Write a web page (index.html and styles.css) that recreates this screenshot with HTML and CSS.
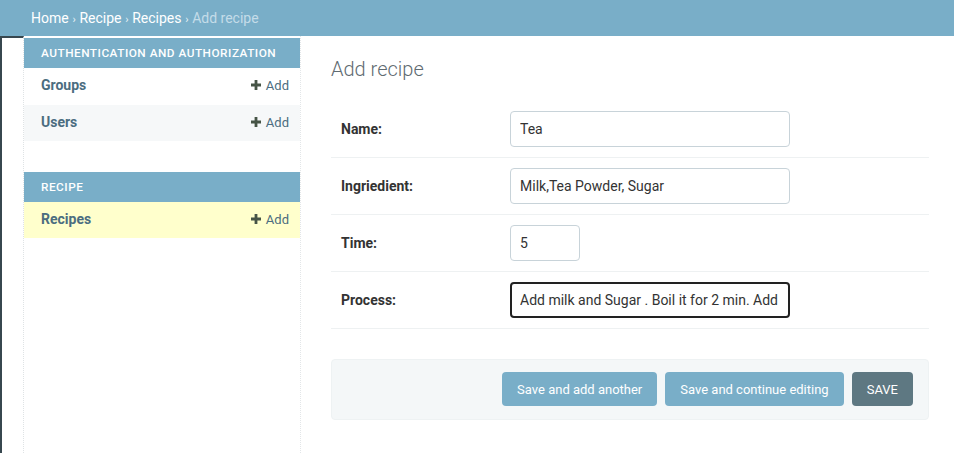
FILE: index.html
```html
<!DOCTYPE html>
<html lang="en">
<head>
<meta charset="utf-8">
<title>Add recipe | Django site admin</title>
<link rel="stylesheet" href="styles.css">
</head>
<body>
<div class="breadcrumbs">
  <a href="#">Home</a><span class="sep">›</span><a href="#">Recipe</a><span class="sep">›</span><a href="#">Recipes</a><span class="sep">›</span><span class="current">Add recipe</span>
</div>
<div class="main">
  <div class="toggle"></div>
  <nav class="sidebar">
    <div class="module">
      <div class="caption">Authentication and Authorization</div>
      <div class="row"><a class="model" href="#">Groups</a><a class="add" href="#"><svg class="plus" viewBox="0 0 10 10" width="10" height="10"><path d="M3.6 0h2.8v3.6H10v2.8H6.4V10H3.6V6.4H0V3.6h3.6z"/></svg>Add</a></div>
      <div class="row alt"><a class="model" href="#">Users</a><a class="add" href="#"><svg class="plus" viewBox="0 0 10 10" width="10" height="10"><path d="M3.6 0h2.8v3.6H10v2.8H6.4V10H3.6V6.4H0V3.6h3.6z"/></svg>Add</a></div>
    </div>
    <div class="module">
      <div class="caption">Recipe</div>
      <div class="row current-model"><a class="model" href="#">Recipes</a><a class="add" href="#"><svg class="plus" viewBox="0 0 10 10" width="10" height="10"><path d="M3.6 0h2.8v3.6H10v2.8H6.4V10H3.6V6.4H0V3.6h3.6z"/></svg>Add</a></div>
    </div>
  </nav>
  <div class="content">
    <h1 class="title">Add recipe</h1>
    <form class="form">
      <div class="form-row"><label class="label">Name:</label><input class="input" type="text" value="Tea"></div>
      <div class="form-row"><label class="label">Ingriedient:</label><input class="input" type="text" value="Milk,Tea Powder, Sugar"></div>
      <div class="form-row"><label class="label">Time:</label><input class="input small" type="text" value="5"></div>
      <div class="form-row"><label class="label">Process:</label><input class="input focused" type="text" value="Add milk and Sugar . Boil it for 2 min. Add tea powder and boil for 3 min."></div>
      <div class="submit-row">
        <button type="button" class="btn">Save and add another</button>
        <button type="button" class="btn">Save and continue editing</button>
        <button type="button" class="btn default">SAVE</button>
      </div>
    </form>
  </div>
</div>
</body>
</html>
```
FILE: styles.css
```css
* { box-sizing: border-box; }
html, body { margin: 0; padding: 0; }
body {
  font-family: Roboto, "Liberation Sans", Arial, sans-serif;
  color: #333;
  background: #fff;
  width: 954px;
  height: 453px;
  overflow: hidden;
}
a { text-decoration: none; }

.breadcrumbs {
  height: 36px;
  line-height: 36px;
  background: #79aec8;
  padding-left: 31px;
  font-size: 14px;
  color: #fff;
}
.breadcrumbs a { color: #fff; }
.breadcrumbs .sep { font-size: 11px; margin: 0 3.7px; color: #e8f2f7; }
.breadcrumbs .current { color: #c4dce8; }

.main {
  display: flex;
  height: 417px;
}
.toggle {
  flex: 0 0 24px;
  border-left: 2px solid #37474f;
  border-top: 2px solid #37474f;
  border-right: 1px dotted #dfe3e5;
  background: #fff;
}
.sidebar {
  flex: 0 0 277px;
  padding-top: 2px;
  border-right: 1px dotted #e3e6e8;
}
.module { margin-bottom: 30px; }
.caption {
  height: 30px;
  line-height: 30px;
  background: #79aec8;
  color: #fff;
  font-size: 11.8px;
  font-weight: 500;
  letter-spacing: 0.5px;
  text-transform: uppercase;
  padding-left: 17px;
}
.row {
  display: flex;
  justify-content: space-between;
  align-items: center;
  height: 37px;
  padding: 0 11px 2px 17px;
  border-bottom: 1px solid #fff;
}
.row.alt { background: #f6f8f9; }
.row.current-model { background: #ffffcc; }
.model {
  color: #4b6d80;
  font-weight: bold;
  font-size: 14px;
}
.add {
  display: flex;
  align-items: center;
  color: #4b6d80;
  font-size: 13px;
}
.plus { fill: #465446; margin-right: 5px; }

.content {
  flex: 1;
  padding: 21px 25px 0 30px;
}
.title {
  margin: 0 0 20px;
  font-size: 20px;
  line-height: 24px;
  font-weight: 300;
  color: #5f6b72;
}
.form { margin: 0; }
.form-row {
  display: flex;
  align-items: center;
  padding: 10px;
  border-bottom: 1px solid #eef1f2;
}
.label {
  flex: 0 0 169px;
  font-size: 14px;
  font-weight: bold;
  color: #333;
}
.input {
  width: 280px;
  height: 36px;
  padding: 0 9px;
  border: 1px solid #c8d3d9;
  border-radius: 4px;
  font-family: inherit;
  font-size: 14px;
  color: #333;
  background: #fff;
  outline: none;
}
.input.small { width: 70px; }
.input.focused {
  border: 2px solid #222;
  padding: 0 8px;
}
.submit-row {
  display: flex;
  justify-content: flex-end;
  gap: 8px;
  margin-top: 30px;
  padding: 12px 15px 13px 14px;
  background: #f4f7f8;
  border: 1px solid #eef2f3;
  border-radius: 4px;
}
.btn {
  height: 34px;
  padding: 0 15px;
  border: 0;
  border-radius: 4px;
  background: #79aec8;
  color: #fff;
  font-family: inherit;
  font-size: 13px;
}
.btn.default { background: #5e7882; }
```
